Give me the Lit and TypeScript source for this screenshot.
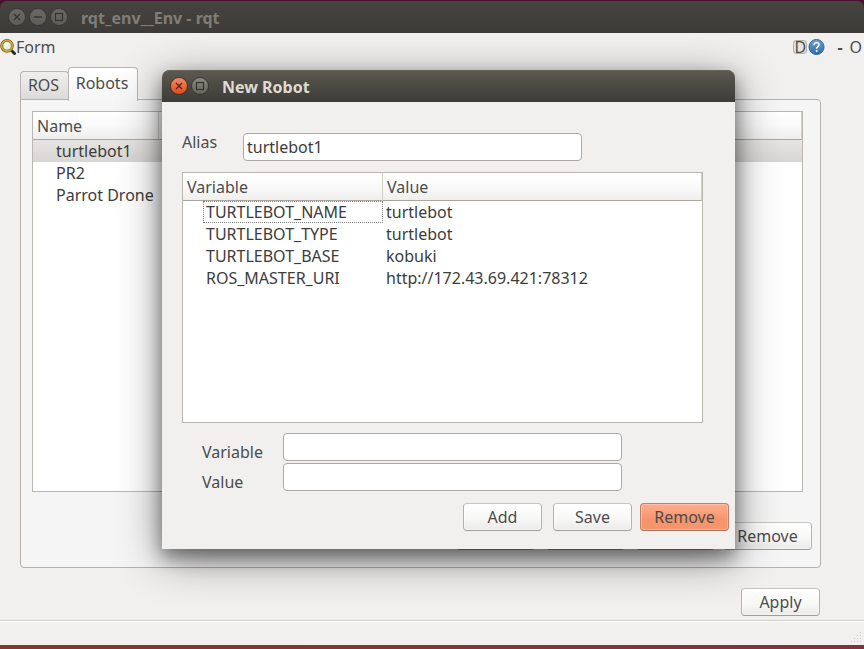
import { LitElement, html, css, svg, nothing } from "lit";
import { customElement, property, state } from "lit/decorators.js";
import { classMap } from "lit/directives/class-map.js";

const shared = css`
  * {
    box-sizing: border-box;
  }
  button,
  input {
    font: inherit;
    color: inherit;
    margin: 0;
  }
  .btn {
    width: 79px;
    height: 28px;
    padding: 0;
    line-height: 20px;
    border: 1px solid #b5b1ab;
    border-top-color: #c8c5c0;
    border-bottom-color: #a09c97;
    border-radius: 4px;
    background: linear-gradient(#ffffff, #f8f8f7 55%, #ebeae9);
    box-shadow: inset 0 0 0 1px rgba(255, 255, 255, 0.5);
    color: #4c4c4c;
  }
  .btn.wide {
    width: 89px;
  }
  .btn.hot {
    border-color: #c0806a;
    border-bottom-color: #a8735f;
    background: linear-gradient(#fdae90, #f7946c 60%, #f6946c);
    box-shadow: inset 0 0 0 1px rgba(255, 210, 190, 0.5);
  }
  .list {
    border: 1px solid #bab6b1;
    background: #fff;
  }
  table {
    width: 100%;
    table-layout: fixed;
    border-collapse: separate;
    border-spacing: 0;
  }
  th {
    height: 28px;
    padding: 0 4px;
    text-align: left;
    font-weight: 400;
    line-height: 20px;
    color: #4c4c4c;
    background: linear-gradient(#ffffff, #fafafa 50%, #efeeed);
    border-right: 1px solid #d2cfcb;
    border-bottom: 1px solid #a9a6a1;
  }
  td {
    height: 22px;
    padding: 0 3px;
    line-height: 20px;
    color: #3c3c3c;
    white-space: nowrap;
  }
  td:first-child {
    padding-left: 23px;
  }
`;

type Glyph = "close" | "min" | "max";

@customElement("window-button")
export class WindowButton extends LitElement {
  @property() glyph: Glyph = "close";
  @property({ type: Boolean }) active = false;
  @property({ type: Boolean }) dim = false;

  static styles = css`
    :host {
      display: block;
      height: 18px;
    }
    button {
      display: block;
      width: 18px;
      height: 18px;
      padding: 0;
      border: 0;
      background: none;
    }
    svg {
      display: block;
    }
  `;

  render() {
    const top = this.active ? "#f58a66" : this.dim ? "#6a6862" : "#8b8a82";
    const bottom = this.active ? "#e04a18" : this.dim ? "#5f5d58" : "#63625c";
    const edge = this.dim ? "#34332f" : "#2f2e2a";
    const ink = this.active ? "#5c2410" : "#35342f";
    const label = { close: "Close", min: "Minimize", max: "Maximize" }[this.glyph];
    return html`<button type="button" aria-label=${label}>
      <svg width="18" height="18" viewBox="0 0 18 18">
        <defs>
          <linearGradient id="g" x1="0" y1="0" x2="0" y2="1">
            <stop offset="0" stop-color=${top} />
            <stop offset="1" stop-color=${bottom} />
          </linearGradient>
        </defs>
        <circle cx="9" cy="9" r="8.5" fill="url(#g)" stroke=${edge} stroke-width="0.8" />
        ${this.glyph === "close"
          ? svg`<path d="M6 6l6 6M12 6l-6 6" stroke=${ink} stroke-width="1.3" />`
          : this.glyph === "min"
            ? svg`<path d="M5 9h8" stroke=${ink} stroke-width="1.4" />`
            : svg`<rect x="5.5" y="5.5" width="7" height="7" fill="none" stroke=${ink} stroke-width="1.2" />`}
      </svg>
    </button>`;
  }
}

@customElement("robot-dialog")
export class RobotDialog extends LitElement {
  @property() alias = "";
  @property({ attribute: false }) variables: [string, string][] = [];

  static styles = [
    shared,
    css`
      :host {
        display: block;
        border-radius: 8px 8px 0 0;
        background: #f1f0ee;
        color: #4c4c4c;
        box-shadow:
          0 8px 18px rgba(0, 0, 0, 0.4),
          0 10px 44px rgba(0, 0, 0, 0.46);
      }
      .title {
        display: flex;
        align-items: center;
        gap: 3px;
        height: 32px;
        padding-left: 8px;
        border-radius: 8px 8px 0 0;
        background: linear-gradient(#5c5a50, #4b4a43 50%, #3d3c38);
        box-shadow: inset 0 1px 0 #66645a;
        color: #dfdbd2;
      }
      h1 {
        margin: 0 0 0 10px;
        font-size: 16px;
        line-height: 20px;
        padding-top: 2px;
      }
      .body {
        padding: 31px 32px 18px 20px;
      }
      .alias {
        display: flex;
        align-items: flex-start;
      }
      label {
        line-height: 18px;
      }
      .alias label {
        width: 61px;
      }
      .field {
        width: 339px;
        height: 28px;
        padding: 0 3px;
        border: 1px solid #aca8a3;
        border-radius: 4px;
        background: #fff;
        color: #3c3c3c;
        outline: none;
      }
      .list {
        height: 251px;
        margin-top: 11px;
      }
      .key {
        width: 200px;
      }
      .focus {
        display: block;
        height: 22px;
        margin-left: -3px;
        margin-right: -3px;
        padding-left: 2px;
        border: 1px dotted #808080;
      }
      .form {
        display: grid;
        grid-template-columns: 81px 339px;
        gap: 2px 0;
        align-items: end;
        margin: 10px 0 0 20px;
      }
      .actions {
        display: flex;
        justify-content: flex-end;
        gap: 8px;
        margin: 12px -26px 0 0;
      }
      .actions .btn:first-child {
        margin-right: 3px;
      }
    `,
  ];

  render() {
    return html`
      <div class="title">
        <window-button glyph="close" active></window-button>
        <window-button glyph="max"></window-button>
        <h1>New Robot</h1>
      </div>
      <div class="body">
        <div class="alias">
          <label for="alias">Alias</label>
          <input class="field" id="alias" type="text" .value=${this.alias} />
        </div>
        <div class="list">
          <table>
            <colgroup><col class="key" /><col /></colgroup>
            <thead>
              <tr><th scope="col">Variable</th><th scope="col">Value</th></tr>
            </thead>
            <tbody>
              ${this.variables.map(
                ([key, value], i) => html`<tr>
                  <td>${i === 0 ? html`<span class="focus">${key}</span>` : key}</td>
                  <td>${value}</td>
                </tr>`,
              )}
            </tbody>
          </table>
        </div>
        <div class="form">
          <label for="variable">Variable</label>
          <input class="field" id="variable" type="text" />
          <label for="value">Value</label>
          <input class="field" id="value" type="text" />
        </div>
        <div class="actions">
          <button class="btn" type="button">Add</button>
          <button class="btn" type="button">Save</button>
          <button class="btn wide hot" type="button">Remove</button>
        </div>
      </div>
    `;
  }
}

@customElement("app-root")
export class AppRoot extends LitElement {
  @state() private robots = ["turtlebot1", "PR2", "Parrot Drone"];
  @state() private selected = 0;

  static styles = [
    shared,
    css`
      :host {
        position: relative;
        display: flex;
        flex-direction: column;
        min-height: 100vh;
        box-sizing: border-box;
        padding: 1px 0 4px;
        overflow: hidden;
        background: linear-gradient(90deg, #7c3b2e, #7c3a34 50%, #7c3340);
        font: 16px/20px "Noto Sans", "Open Sans", sans-serif;
        color: #4c4c4c;
      }
      .desktop {
        height: 8px;
        margin: -1px 0 -7px;
        background: #4a1230;
      }
      .title {
        display: flex;
        align-items: center;
        gap: 3px;
        height: 32px;
        padding-left: 8px;
        border-radius: 7px 7px 0 0;
        background: linear-gradient(#45443f, #3c3b37);
        color: #807d78;
      }
      h1 {
        margin: 0 0 0 10px;
        font-size: 16px;
        line-height: 20px;
        padding-top: 2px;
      }
      main {
        flex: 1;
        display: flex;
        flex-direction: column;
        background: #f1f0ee;
      }
      .dock {
        display: flex;
        align-items: center;
        height: 28px;
        padding-right: 2px;
      }
      .dock svg {
        display: block;
      }
      .dock .name {
        flex: 1;
      }
      .dock button {
        height: 20px;
        padding: 0;
        border: 0;
        background: none;
        line-height: 20px;
      }
      .dock .detach {
        width: 14px;
        height: 14px;
        margin-right: 1px;
        border-radius: 4px;
        box-shadow: inset 0 0 0 1px #b4b1ac;
        background: #e6e4e1;
        line-height: 14px;
      }
      .dock .minus {
        margin: 0 7px 0 12px;
        font-weight: 700;
      }
      .tabs {
        display: flex;
        align-items: flex-end;
        height: 39px;
        padding-left: 20px;
      }
      .tab {
        height: 29px;
        width: 49px;
        padding: 0 2px 3px 0;
        border: 1px solid #b9b5b0;
        border-bottom: 0;
        border-radius: 4px 4px 0 0;
        background: linear-gradient(#f0efed, #dcdad8);
      }
      .tab.current {
        position: relative;
        z-index: 1;
        width: 70px;
        height: 34px;
        margin: 0 0 -1px -1px;
        padding-bottom: 4px;
        background: linear-gradient(#ffffff, #f6f6f6);
      }
      .panel {
        flex: 1;
        display: flex;
        flex-direction: column;
        margin: -1px 43px 0 20px;
        padding: 11px 17px 17px 11px;
        border: 1px solid #b5b1ab;
        border-radius: 0 4px 4px 4px;
        background: #f5f5f5;
      }
      .list {
        flex: 1;
      }
      .name-col {
        width: 126px;
      }
      .selected td {
        background: linear-gradient(#e6e5e3, #d8d6d3);
      }
      .actions {
        display: flex;
        justify-content: flex-end;
        gap: 11px;
        margin: 30px -9px 0 0;
      }
      .actions .wide {
        margin-left: -3px;
      }
      .apply {
        display: flex;
        justify-content: flex-end;
        margin: 20px 44px 4px 0;
      }
      .status {
        display: flex;
        justify-content: flex-end;
        align-items: flex-end;
        height: 25px;
        border-top: 1px solid #d2d0cd;
        box-shadow: inset 0 1px 0 #fff;
        background: #f1f0ee;
      }
      robot-dialog {
        position: absolute;
        z-index: 2;
        left: 162px;
        top: 70px;
        width: 573px;
      }
    `,
  ];

  private grip() {
    const dots: [number, number][] = [];
    for (let r = 0; r < 4; r++) for (let c = 3 - r; c < 4; c++) dots.push([c * 3, r * 3]);
    return html`<svg width="14" height="13" viewBox="0 0 14 13" aria-hidden="true">
      ${dots.map(([x, y]) => svg`<rect x=${x + 1} y=${y} width="1" height="1" fill="#cfccc8" />`)}
    </svg>`;
  }

  render() {
    return html`
      <div class="desktop"></div>
      <header class="title">
        <window-button glyph="close" dim></window-button>
        <window-button glyph="min" dim></window-button>
        <window-button glyph="max" dim></window-button>
        <h1>rqt_env__Env - rqt</h1>
      </header>
      <main>
        <div class="dock">
          <svg width="16" height="16" viewBox="0 0 16 16" aria-hidden="true">
            <path d="M11.500 11.500l3 3" stroke="#2b2924" stroke-width="3" stroke-linecap="round" />
            <circle cx="7" cy="6.800" r="6" fill="#e9efe2" stroke="#a8641c" stroke-width="1.8" />
            <circle cx="7" cy="6.800" r="5.600" fill="none" stroke="#e8b838" stroke-width="0.8" />
            <circle cx="7" cy="6.800" r="4.400" fill="none" stroke="#7aa02c" stroke-width="1.3" />
            <circle cx="6" cy="5.600" r="2" fill="#fff" />
          </svg>
          <span class="name">Form</span>
          <button class="detach" type="button">D</button>
          <button type="button" aria-label="Help">
            <svg width="17" height="20" viewBox="0 0 17 20">
              <defs>
                <linearGradient id="h" x1="0" y1="0" x2="0" y2="1">
                  <stop offset="0" stop-color="#6fa3d4" />
                  <stop offset="1" stop-color="#2c6cab" />
                </linearGradient>
              </defs>
              <circle cx="8.500" cy="10" r="7.500" fill="url(#h)" stroke="#2d6398" />
              <path
                d="M6 8.200c0-3.400 5-3.300 5-.5 0 1.900-2.400 1.900-2.400 4"
                fill="none"
                stroke="#fff"
                stroke-width="1.5"
              />
              <circle cx="8.600" cy="14" r="1" fill="#fff" />
            </svg>
          </button>
          <button class="minus" type="button">-</button>
          <button type="button">O</button>
        </div>
        <div class="tabs" role="tablist">
          <button class="tab" type="button" role="tab" aria-selected="false">ROS</button>
          <button class="tab current" type="button" role="tab" aria-selected="true">Robots</button>
        </div>
        <section class="panel">
          <div class="list">
            <table>
              <colgroup><col class="name-col" /><col /></colgroup>
              <thead>
                <tr><th scope="col">Name</th><th scope="col" aria-label="Details"></th></tr>
              </thead>
              <tbody>
                ${this.robots.map(
                  (name, i) => html`<tr
                    class=${classMap({ selected: i === this.selected })}
                    @click=${() => (this.selected = i)}
                  >
                    <td>${name}</td>
                    <td>${nothing}</td>
                  </tr>`,
                )}
              </tbody>
            </table>
          </div>
          <div class="actions">
            <button class="btn" type="button" aria-label="Add"></button>
            <button class="btn" type="button" aria-label="Edit"></button>
            <button class="btn" type="button" aria-label="Save"></button>
            <button class="btn wide" type="button">Remove</button>
          </div>
        </section>
        <div class="apply"><button class="btn" type="button">Apply</button></div>
      </main>
      <footer class="status">${this.grip()}</footer>
      <robot-dialog
        .alias=${"turtlebot1"}
        .variables=${[
          ["TURTLEBOT_NAME", "turtlebot"],
          ["TURTLEBOT_TYPE", "turtlebot"],
          ["TURTLEBOT_BASE", "kobuki"],
          ["ROS_MASTER_URI", "http://172.43.69.421:78312"],
        ]}
      ></robot-dialog>
    `;
  }
}
